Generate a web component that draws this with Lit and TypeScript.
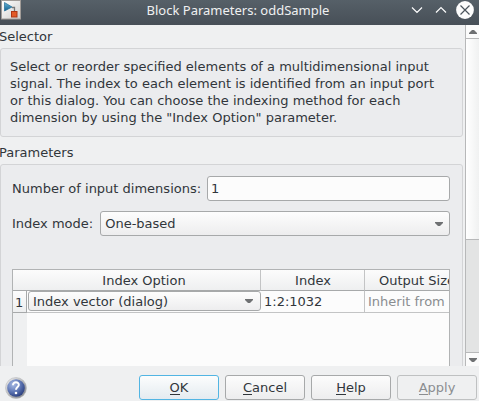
import { LitElement, html, css, svg } from "lit";
import { customElement } from "lit/decorators.js";

const downArrow = svg`<svg class="arrow" width="8" height="4" viewBox="0 0 8 4"><path d="M0 0H8V1L5 4H3L0 1Z" fill="#6f7173"/></svg>`;

@customElement("app-root")
export class AppRoot extends LitElement {
  static styles = css`
    :host {
      display: flex;
      flex-direction: column;
      width: 479px;
      height: 401px;
      overflow: hidden;
      background: #eff0f1;
      color: #31363b;
      font: 13px/17px "DejaVu Sans", sans-serif;
      white-space: nowrap;
    }
    * { box-sizing: border-box; }
    svg { display: block; flex: none; }
    .titlebar {
      flex: none;
      height: 25px;
      display: grid;
      grid-template-columns: 70px 1fr 70px;
      background: linear-gradient(#566068, #474f57);
      color: #eff0f1;
    }
    .title {
      font: 13px/18px "Noto Sans", sans-serif;
      text-align: center;
      padding-top: 1px;
      padding-right: 3px;
    }
    .main { display: flex; height: 341px; flex: none; }
    .content { width: 465px; padding-right: 2px; overflow: hidden; }
    .caption { height: 23px; padding-top: 3px; margin-left: -1px; }
    .group {
      border: 1px solid #d3d4d6;
      border-radius: 3px;
      background: #ebecee;
    }
    .description { height: 89px; padding: 9px 9px 0; margin-bottom: 4px; }
    .parameters { height: 240px; padding: 11px 12px 0 11px; }
    .parameters, .description { width: 463px; }
    .row { display: flex; align-items: center; height: 25px; margin-bottom: 10px; }
    .field {
      flex: 1;
      height: 25px;
      margin-left: 6px;
      padding: 0 6px 0 3px;
      border: 1px solid #a7a9aa;
      border-radius: 3px;
      background: #fcfcfc;
      display: flex;
      align-items: center;
      justify-content: space-between;
    }
    .combo { background: linear-gradient(#fdfdfd, #ededee); margin-left: 7px; padding-left: 4px; }
    .table {
      margin-top: 33px;
      height: 110px;
      border: 1px solid #b1b3b4;
      background: #fcfcfc;
      display: grid;
      grid-template-columns: 14px 234px 104px 1fr;
      grid-template-rows: 21px 22px 1fr;
      overflow: hidden;
    }
    .head {
      background: linear-gradient(#fcfcfc, #eeeff0);
      border-right: 1px solid #c3c4c5;
      border-bottom: 1px solid #a7a9aa;
      text-align: center;
      padding: 2px 0 0 1px;
    }
    .corner { border-right: 0; }
    .last { border-right: 0; text-align: left; padding-left: 14px; overflow: hidden; }
    .number {
      border-right: 1px solid #a7a9aa;
      border-bottom: 1px solid #a7a9aa;
      background: linear-gradient(#fcfcfc, #eeeff0);
      padding: 3px 0 0 2px;
    }
    .cell { border-right: 1px solid #c3c4c5; border-bottom: 1px solid #c3c4c5; padding: 2px 0 0 3px; overflow: hidden; }
    .cell.editor { padding: 0 0 0 1px; border-right: 0; }
    .editor .field { width: 233px; height: 20px; margin: 0; padding-right: 7px; }
    .muted { color: #8a8d90; border-right: 0; }
    .gutter { background: #eff0f1; }
    .scrollbar {
      width: 14px;
      border-left: 1px solid #b7b8b9;
      background: #e3e4e4;
      display: flex;
      flex-direction: column;
    }
    .step { height: 13px; background: #fbfbfb; display: flex; align-items: center; justify-content: center; }
    .thumb { height: 202px; border: solid #b7b8b9; border-width: 1px 0; background: linear-gradient(90deg, #fff, #f0f1f1); }
    .track { flex: 1; }
    .step.down { height: 14px; border-top: 1px solid #b7b8b9; }
    .footer { display: flex; align-items: flex-start; padding: 9px 2px 0 5px; gap: 6px; }
    .help { margin: 2px 106px 0 0; }
    .button {
      width: 80px;
      height: 25px;
      border: 1px solid #a7a9aa;
      border-radius: 3px;
      background: linear-gradient(#fcfcfc, #ededee);
      text-align: center;
      padding-top: 3px;
    }
    .button u { text-decoration: none; box-shadow: 0 1px 0 currentColor; display: inline-block; height: 15px; }
    .primary { border-color: #52b5e3; background: linear-gradient(#fcfdfd, #e4ebf0); }
    .disabled { color: #8a8d90; border-color: #bfc1c2; background: #eff0f1; }
  `;

  render() {
    return html`
      <header class="titlebar">
        <svg width="24" height="25" viewBox="0 0 24 25">
          <defs><linearGradient id="tile" x2="1" y2="1"><stop stop-color="#fff"/><stop offset="1" stop-color="#d0cfcd"/></linearGradient>
          <linearGradient id="tri" x2="0" y2="1"><stop stop-color="#65b4d8"/><stop offset="1" stop-color="#11608f"/></linearGradient></defs>
          <rect x="1.5" y=".5" width="19" height="18.500" fill="url(#tile)" stroke="#a19c98"/>
          <path d="M12 7.500H14.500V12" fill="none" stroke="#777" stroke-width="1.300"/>
          <path d="M4.500 2.500L12 7L4.500 11Z" fill="url(#tri)" stroke="#216b95" stroke-width=".7"/>
          <rect x="11.500" y="11.500" width="5.500" height="5.500" fill="#e25a27" stroke="#ad3714"/>
        </svg>
        <div class="title">Block Parameters: oddSample</div>
        <svg width="70" height="25" viewBox="0 0 70 25" fill="none" stroke="#fcfcfc" stroke-width="1.200">
          <path d="M3 7.500L8 12.500L13 7.500M27 12.500L32 7.500L37 12.500"/>
          <circle cx="56" cy="10" r="8.900" fill="#fcfcfc" stroke="none"/>
          <path d="M51.500 5.500L60.500 14.500M60.500 5.500L51.500 14.500" stroke="#4b545c"/>
        </svg>
      </header>
      <main class="main">
        <div class="content">
          <div class="caption">Selector</div>
          <section class="group description">
            Select or reorder specified elements of a multidimensional input<br />
            signal. The index to each element is identified from an input port<br />
            or this dialog. You can choose the indexing method for each<br />
            dimension by using the "Index Option" parameter.
          </section>
          <div class="caption">Parameters</div>
          <section class="group parameters">
            <div class="row">Number of input dimensions:<div class="field">1</div></div>
            <div class="row">Index mode:<div class="field combo">One-based${downArrow}</div></div>
            <div class="table">
              <div class="head corner"></div>
              <div class="head">Index Option</div>
              <div class="head">Index</div>
              <div class="head last">Output Size</div>
              <div class="number">1</div>
              <div class="cell editor"><div class="field combo">Index vector (dialog)${downArrow}</div></div>
              <div class="cell">1:2:1032</div>
              <div class="cell muted">Inherit from</div>
              <div class="gutter"></div>
            </div>
          </section>
        </div>
        <div class="scrollbar">
          <div class="step"><svg width="8" height="4" viewBox="0 0 8 4"><path d="M0 4H8V3L5 0H3L0 3Z" fill="#6f7173"/></svg></div>
          <div class="thumb"></div>
          <div class="track"></div>
          <div class="step down">${downArrow}</div>
        </div>
      </main>
      <footer class="footer">
        <svg class="help" width="22" height="22" viewBox="0 0 22 22">
          <defs><radialGradient id="ball" cx=".35" cy=".3" r=".75"><stop stop-color="#a9bce5"/><stop offset=".55" stop-color="#6078b6"/><stop offset="1" stop-color="#293d7d"/></radialGradient>
          <linearGradient id="rim" x2="1" y2="1"><stop stop-color="#f4f4f4"/><stop offset="1" stop-color="#777a80"/></linearGradient></defs>
          <circle cx="11" cy="11" r="10.500" fill="url(#rim)" stroke="#b9babd" stroke-width=".6"/>
          <circle cx="11" cy="11" r="8.800" fill="url(#ball)"/>
          <path d="M8 8.200C8 4.200 14 4.500 13.800 8C13.700 10 11 10.200 11 12.800" fill="none" stroke="#fff" stroke-width="2"/>
          <circle cx="11" cy="16" r="1.300" fill="#fff"/>
        </svg>
        <div class="button primary"><u>O</u>K</div>
        <div class="button"><u>C</u>ancel</div>
        <div class="button"><u>H</u>elp</div>
        <div class="button disabled"><u>A</u>pply</div>
      </footer>
    `;
  }
}
